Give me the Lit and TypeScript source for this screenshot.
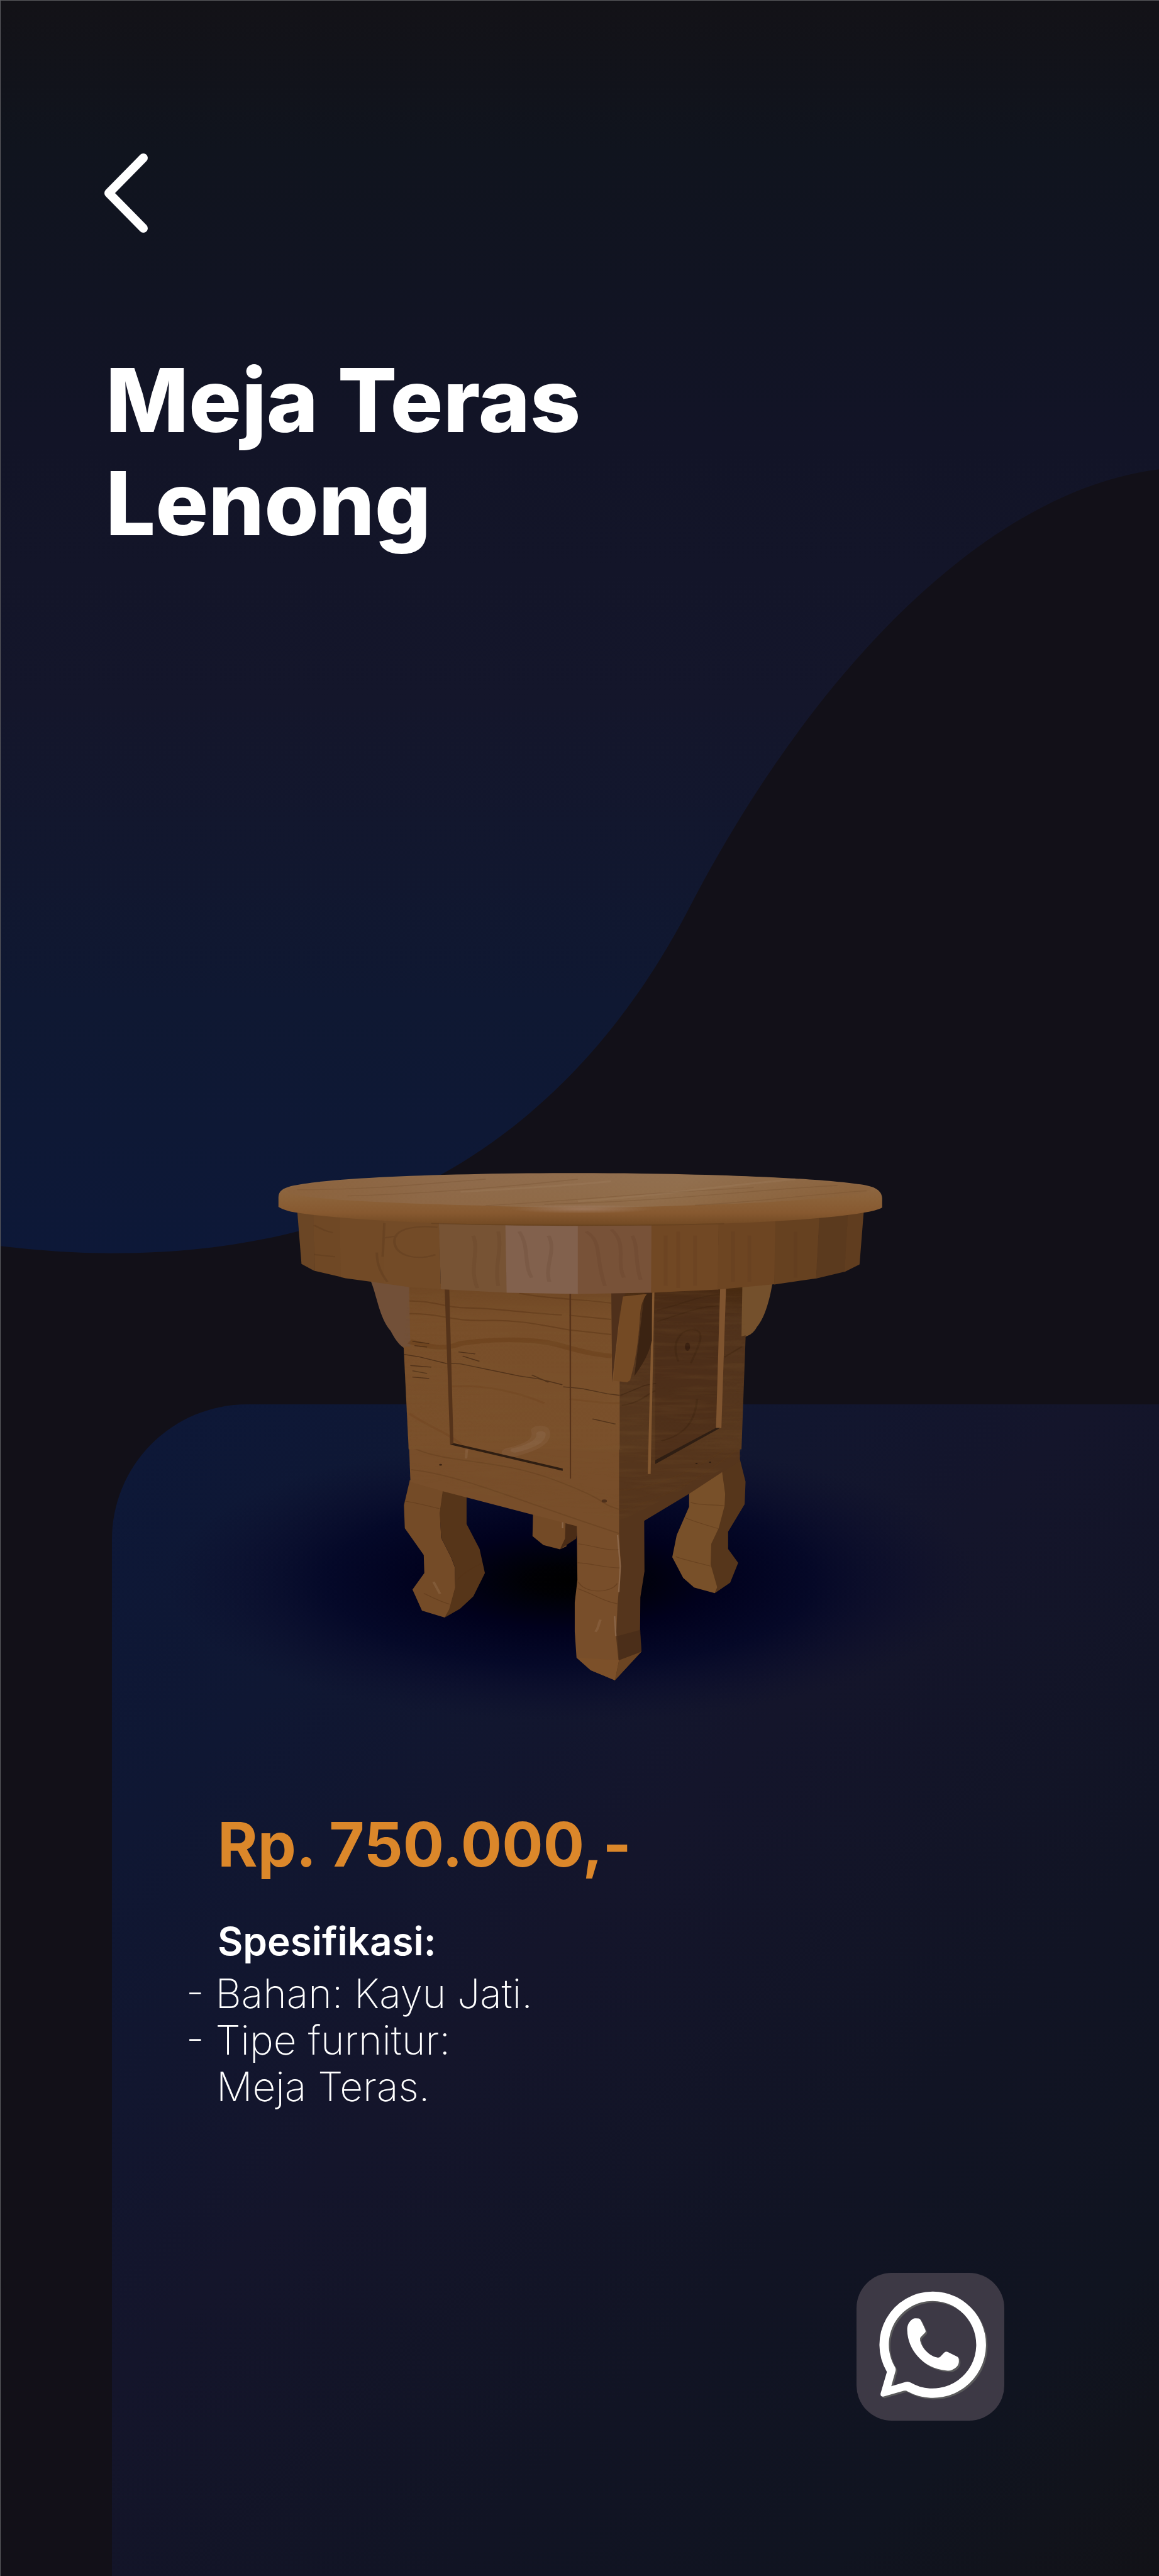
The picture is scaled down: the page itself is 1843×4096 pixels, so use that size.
import { LitElement, html, svg, css } from "lit";
import { customElement } from "lit/decorators.js";

const facets: [string, string][] = [
  ["110,285 150,295 150,567 120,535", "#6b4625"],
  ["149,295 212,305 216,598 150,567", "#6f4825"],
  ["211,305 318,322 316,628 225,603 214,598", "#724a26"],
  ["317,320 449,335 453,656 377,645 315,628", "#734b27"],
  ["448,335 608,345 611,672 453,656", "#775334"],
  ["607,345 781,350 781,678 610,672", "#82614d"],
  ["780,350 957,345 956,672 780,678", "#785238"],
  ["956,345 1117,335 1115,657 955,672", "#714824"],
  ["1116,335 1253,320 1250,632 1114,657", "#6d4522"],
  ["1252,320 1358,305 1350,604 1249,633", "#664120"],
  ["1357,305 1426,295 1418,572 1349,605", "#5b3a1e"],
  ["1425,295 1463,285 1453,537 1417,573", "#603d1f"],
];

@customElement("product-table-art")
export class ProductTableArt extends LitElement {
  static styles = css`
    :host { display: block; }
    .art { display: block; width: 100%; height: auto; }
  `;

  render() {
    return html`<svg class="art" viewBox="400 3000 2200 1480" role="img" aria-label="Meja Teras Lenong">
      <defs>
        <radialGradient id="shade">
          <stop offset="0" stop-color="#000" />
          <stop offset=".1" stop-color="#000003" stop-opacity=".98" />
          <stop offset=".34" stop-color="#00001c" stop-opacity=".96" />
          <stop offset=".6" stop-color="#020526" stop-opacity=".8" />
          <stop offset=".8" stop-color="#080a2a" stop-opacity=".46" />
          <stop offset="1" stop-color="#0c0e2c" stop-opacity="0" />
        </radialGradient>
        <linearGradient id="rim" x1="0" y1="0" x2="0" y2="1">
          <stop offset="0" stop-color="#8f6b4b" />
          <stop offset=".5" stop-color="#8b6138" />
          <stop offset=".75" stop-color="#875930" />
          <stop offset="1" stop-color="#714923" />
        </linearGradient>
        <linearGradient id="top" x1="0" y1="0" x2="1" y2=".1">
          <stop offset="0" stop-color="#8a6039" />
          <stop offset=".3" stop-color="#8f6b4c" />
          <stop offset=".7" stop-color="#937252" />
          <stop offset="1" stop-color="#8a623c" />
        </linearGradient>
        <linearGradient id="front" x1="0" y1="0" x2="0" y2="1">
          <stop offset="0" stop-color="#6f4724" />
          <stop offset=".2" stop-color="#784e29" />
          <stop offset="1" stop-color="#7a502b" />
        </linearGradient>
        <linearGradient id="side" x1="0" y1="0" x2="0" y2="1">
          <stop offset="0" stop-color="#47290f" />
          <stop offset=".2" stop-color="#4f311b" />
          <stop offset="1" stop-color="#58381e" />
        </linearGradient>
        <radialGradient id="glow">
          <stop offset="0" stop-color="#a98874" stop-opacity=".6" />
          <stop offset="1" stop-color="#a98874" stop-opacity="0" />
        </radialGradient>
        <filter id="grain" x="0" y="0" width="100%" height="100%">
          <feTurbulence type="fractalNoise" baseFrequency=".006 .07" numOctaves="4" seed="8" />
          <feColorMatrix values="0 0 0 0 .2  0 0 0 0 .1  0 0 0 0 .03  1.6 0 0 0 -.68" />
        </filter>
        <clipPath id="front-clip"><path d="M377 640L860 670L880 1100V2070L364 1570V930Z" /></clipPath>
        <clipPath id="wood">
          <path transform="translate(650 2980) scale(1.0842 .5421)" d="M377 600H1173L1180 880L1170 1470L885 1760L378 1568L364 930Z" />
        </clipPath>
      </defs>

      <ellipse cx="1478" cy="4090" rx="1050" ry="365" fill="url(#shade)" />

      <g transform="translate(900 3700) scale(.7653 .4464)">
        <polygon fill="#734a26" points="627,470 625,615 662,667 718,692 740,675 740,530" />
        <polygon fill="#4a2c16" points="737,530 780,545 773,630 718,692 735,630" />
        <polygon fill="#744b27" points="210,290 190,437 193,570 257,725 259,830 219,925 251,1048 328,1088 345,1040 364,915 362,795 350,740 316,625 312,480 324,340" />
        <polygon fill="#563519" points="322,345 402,380 402,545 446,690 464,830 425,965 380,1037 328,1088 343,1040 363,915 362,795 350,740 316,625 311,480" />
        <polygon fill="#785029" points="1155,350 1155,445 1113,610 1098,738 1135,858 1172,914 1242,946 1252,912 1230,780 1232,660 1257,570 1277,440 1279,370 1270,220" />
        <polygon fill="#56361b" points="1266,235 1327,170 1346,300 1343,430 1287,590 1287,690 1321,770 1294,885 1242,946 1250,912 1228,780 1230,660 1255,570 1275,440 1277,370" />
        <polygon fill="#55351c" points="1327,-60 1327,180 1266,245 1155,370 1003,527 1004,820 990,970 989,1170 994,1285 904,1452 880,1330 880,-60" />
        <path fill="#784e2a" d="M204 -60L212 302L322 355L775 558L777 870L768 1000V1170L774 1320L822 1393L904 1452L916 1335L908 1200L913 1010L924 790L918 600V-60Z" />
        <path fill="none" stroke="#8a6547" stroke-width="5" d="M913 610L922 790L917 940M903 1080L907 1195M727 535V570" />
        <path fill="#7c5029" d="M774 1320L822 1393L904 1452L918 1335Z" />
        <path fill="#6b4422" d="M904 1452L994 1285L918 1335Z" />
        <path fill="#452a17" fill-opacity=".6" d="M912 1195L990 1160L994 1285L918 1335Z" />
        <path fill="none" stroke="#573417" stroke-opacity=".45" stroke-width="4" d="M190 412C230 420 270 440 310 456M258 948C290 975 320 1000 345 1010M370 870C390 830 420 800 452 775M778 920C830 950 860 990 912 1008M778 770C830 775 870 800 920 800M780 660C830 670 870 700 916 695M1140 508C1170 530 1220 555 1254 572M1160 420C1200 440 1230 430 1275 440M780 880C800 950 890 950 912 890M1110 735C1150 760 1190 770 1228 790" />
        <path fill="none" stroke="#5c3819" stroke-opacity=".35" stroke-width="6" d="M210 95C330 200 500 160 700 290S840 420 918 460M214 230C380 260 560 400 918 600M920 470C1060 400 1200 280 1325 100M920 350C1080 330 1200 200 1330 50" />
        <path fill="none" stroke="#96704f" stroke-opacity=".4" stroke-width="9" d="M855 1100C845 1140 850 1150 838 1170M290 880L312 950M403 110L400 165" />
        <circle cx="868" cy="412" r="9" fill="#4e301b" /><circle cx="314" cy="202" r="5" fill="#3c2414" />
        <circle cx="1180" cy="194" r="4" fill="#2f1c10" /><circle cx="1226" cy="187" r="4" fill="#2f1c10" />
      </g>

      <g transform="translate(650 2980) scale(1.0842 .5421)">
        <path fill="#725038" d="M284 610C300 680 305 790 333 855C342 890 352 920 364 935H382V630Z" />
        <path fill="#74502c" d="M1245 625C1240 690 1228 790 1208 835C1200 865 1190 875 1183 880L1170 892V625Z" />
        <path fill="url(#front)" d="M377 630H885V1420H376L364 930H380Z" />
        <path fill="url(#side)" d="M880 640H1173L1171 880L1181 876L1171 1420H880Z" />
        <path fill="#4a2c18" fill-opacity=".6" d="M965 650H1118L1112 1320L965 1480Z" />
        <g clip-path="url(#front-clip)" fill="none">
          <path stroke="#5a3416" stroke-opacity=".5" stroke-width="6" d="M378 712C440 710 460 745 520 745S680 775 742 778M378 772C450 770 480 810 560 805S700 830 760 850L860 872M640 675C700 700 800 705 860 722M760 780L860 800" />
          <path stroke="#623612" stroke-opacity=".35" stroke-width="22" d="M378 905C440 940 470 940 500 915C580 890 680 890 740 925S820 965 862 975" />
          <path stroke="#6a3d18" stroke-opacity=".28" stroke-width="8" d="M480 1120C560 1110 640 1150 700 1200M378 1250C430 1320 460 1330 500 1395M760 1180C800 1190 840 1200 880 1200" />
          <path stroke="#3f2513" stroke-opacity=".7" stroke-width="4" d="M365 967L400 978L465 1010L500 1012L640 1070L690 1085L743 1112M745 1122L790 1130L850 1155L882 1163M385 905L425 915M390 925L420 932M380 1020L430 1028M385 1045L420 1058M385 1075L425 1082M495 955L535 965M505 975L545 1000M670 1065L710 1100M815 1275L870 1300" />
          <path stroke="#a98874" stroke-opacity=".14" stroke-width="44" stroke-linecap="round" d="M690 1330C700 1380 670 1410 620 1435" />
          <path stroke="#a98874" stroke-opacity=".16" stroke-width="22" stroke-linecap="round" d="M692 1345C695 1380 670 1405 630 1425" />
        </g>
        <path fill="none" stroke="#3f2513" stroke-opacity=".7" stroke-width="4" d="M882 1163L940 1115L967 1105" />
        <path fill="none" stroke="#3b2210" stroke-opacity=".4" stroke-width="5" d="M970 755C1020 735 1060 690 1118 680M970 810C1020 780 1060 740 1116 735M1130 980L1172 930M885 1210C930 1200 950 1150 965 1140M1020 1000C1000 900 1030 840 1060 850S1060 960 1050 1010M980 1380C1040 1350 1060 1280 1065 1180" />
        <ellipse cx="1042" cy="930" rx="6" ry="20" fill="#371e10" />
      </g>
      <g clip-path="url(#wood)"><rect x="1000" y="3300" width="1000" height="650" filter="url(#grain)" opacity=".3" /></g>
      <g transform="translate(650 2980) scale(1.0842 .5421)">
        <path fill="#55331a" d="M462 650H473L483 1392L475 1398Z" />
        <path fill="#2f1e12" d="M475 1398L484 1391L744 1512V1523Z" />
        <path fill="#57331a" d="M760 670H764V1560H761Z" />
        <path fill="#835830" d="M958 670H963L954 1538H947Z" />
        <path fill="#7f542f" d="M1120 650H1134L1123 1318L1110 1324Z" />
        <path fill="#2f1e13" d="M965 1472L1110 1318H1120L965 1491Z" />
        <path fill="#4f301b" d="M860 670H895L882 740L862 1100Z" />
        <path fill="#3b2312" d="M940 670H957V900C950 960 940 1000 915 1070Z" />
        <path fill="#744a24" d="M888 690L945 678C930 720 930 750 928 800C925 900 918 1000 905 1090L898 1100L865 1092L875 900L882 760Z" />
        ${facets.map(([points, color]) => svg`<polygon points=${points} fill=${color} />`)}
        <g fill="none" stroke="#56341a" stroke-opacity=".3" stroke-width="6">
          <path d="M445 360C400 350 340 360 342 430S400 520 440 490M318 340L314 500M320 410L350 400M300 480C300 540 310 580 325 620M150 350C170 370 180 380 195 385M150 490L200 500" />
          <path stroke-opacity=".14" stroke-width="9" d="M530 400C545 470 520 560 540 650M590 380C600 470 580 540 590 640M640 380C665 450 650 540 670 600M710 400C730 470 700 540 712 620M800 380C840 430 820 500 845 640M860 370C900 440 870 520 890 600M910 400C925 450 915 520 930 610M990 400V640M1020 380V650M1060 400V640M1150 380V620M1190 400V620M1300 380V600" />
        </g>
        <path fill="url(#rim)" d="M65 262V215C66 185 75 175 95 163C190 120 480 101 780 101C1090 101 1370 125 1470 160C1495 170 1506 190 1507 220V265C1500 275 1480 284 1462 290C1330 335 1050 353 780 353C500 353 230 328 110 290C90 284 75 275 65 262Z" />
        <path fill="url(#top)" d="M85 178C150 125 480 104 780 104C1090 104 1380 125 1480 170C1500 205 1300 240 1060 254C900 268 680 268 560 256C340 245 60 225 85 178Z" opacity=".7" />
        <ellipse cx="790" cy="272" rx="170" ry="22" fill="url(#glow)" />
        <path fill="none" stroke="#6d4626" stroke-opacity=".25" stroke-width="4" d="M230 210C400 200 600 170 780 130M560 256C760 235 900 200 1200 170M700 250C1000 235 1200 180 1400 160M110 180C300 180 420 150 560 130M1060 254C1200 240 1350 200 1470 185" />
        <path fill="none" stroke="#a58363" stroke-opacity=".25" stroke-width="9" d="M780 235C950 215 1100 165 1300 130M500 190C640 175 760 160 860 140" />
        <path fill="none" stroke="#5e3b1c" stroke-opacity=".5" stroke-width="5" d="M430 341C600 352 950 354 1130 342" />
      </g>
    </svg>`;
  }
}

@customElement("app-root")
export class AppRoot extends LitElement {
  static styles = css`
    :host { display: block; }
    .page {
      position: relative;
      box-sizing: border-box;
      display: flex;
      flex-direction: column;
      min-height: 100vh;
      overflow: hidden;
      background: #121018;
      color: #fff;
      font-family: Inter, "Open Sans", sans-serif;
    }
    .page::after {
      content: "";
      position: absolute;
      inset: 0;
      border-top: 1px solid #5c5c60;
      border-left: 1px solid #5c5c60;
      pointer-events: none;
    }
    .wave { position: absolute; top: 0; left: 0; width: 100%; height: auto; }
    .intro {
      position: relative;
      display: flex;
      flex-direction: column;
      align-items: flex-start;
      gap: 180px;
      min-height: 1844px;
      box-sizing: border-box;
      padding: 240px 160px 0;
    }
    .back { display: block; line-height: 0; }
    .title { margin: 0 0 0 8px; max-width: 900px; font-size: 140px; line-height: 164px; font-weight: 800; }
    .figure { position: relative; z-index: 1; width: 73.3%; margin: 0 auto -520px; }
    .card {
      position: relative;
      flex: 1;
      box-sizing: border-box;
      display: flex;
      flex-direction: column;
      margin-left: 178px;
      padding: 640px 246px 247px 168px;
      border-top-left-radius: 215px;
      background: linear-gradient(135deg, #0d1838 0%, #0f1733 20%, #14152b 44%, #111424 68%, #101420 85%, #121217 100%);
    }
    .price { margin: 0; color: #db872a; font-size: 97px; line-height: 120px; font-weight: 700; }
    .heading { margin: 52px 0 4px; font-size: 62px; line-height: 84px; font-weight: 600; }
    .specs { margin: 0 0 0 -50px; padding: 0; list-style: none; font-size: 64px; line-height: 74px; font-weight: 200; }
    .detail { display: block; padding-left: 48px; }
    .chat {
      display: grid;
      place-items: center;
      align-self: flex-end;
      width: 235px;
      height: 235px;
      margin-top: auto;
      border-radius: 56px;
      background: #3d3945;
    }
  `;

  render() {
    return html`<main class="page">
      <svg class="wave" viewBox="0 0 3001 3260" aria-hidden="true">
        <defs>
          <linearGradient id="sky" x1="0" y1="0" x2="0" y2="1">
            <stop offset="0" stop-color="#131217" />
            <stop offset=".12" stop-color="#10141e" />
            <stop offset=".35" stop-color="#121427" />
            <stop offset=".56" stop-color="#14162b" />
            <stop offset=".8" stop-color="#0f1832" />
            <stop offset="1" stop-color="#0d1838" />
          </linearGradient>
        </defs>
        <path fill="url(#sky)" d="M0 0H3001V1215C2560 1270 2108 1729 1785 2350C1462 2971 945 3245 287 3245Q150 3244 0 3226Z" />
      </svg>
      <header class="intro">
        <a class="back" href="#" aria-label="Kembali">
          <svg width="80" height="134" viewBox="0 0 80 134" fill="none" stroke="#fff" stroke-width="14" stroke-linecap="round" stroke-linejoin="round" aria-hidden="true"><path d="M68 11L13 67L68 123" /></svg>
        </a>
        <h1 class="title">Meja Teras Lenong</h1>
      </header>
      <product-table-art class="figure"></product-table-art>
      <section class="card">
        <p class="price">Rp. 750.000,-</p>
        <h2 class="heading">Spesifikasi:</h2>
        <ul class="specs">
          <li>- Bahan: Kayu Jati.</li>
          <li>- Tipe furnitur:<span class="detail">Meja Teras.</span></li>
        </ul>
        <a class="chat" href="#" aria-label="WhatsApp">
          <svg width="235" height="235" viewBox="204 193 1148 1148" aria-hidden="true">
            <defs>
              <g id="phone">
                <path fill-rule="evenodd" d="M795 338A413 413 0 1 1 600 1114Q590 1105 570 1109L412 1154Q388 1156 391 1130L440 962A413 413 0 0 1 795 338ZM795 411A340 340 0 0 0 500 920Q512 935 507 955L474 1073L585 1041Q605 1034 625 1046A340 340 0 1 0 795 411Z" />
                <path d="M660 546Q690 545 698 553Q706 562 738 634Q744 646 738 656L702 692Q694 700 698 718C712 780 770 838 830 850Q844 853 854 845L884 814Q896 801 912 807L986 844Q999 851 999 870C1004 915 972 936 942 949Q930 954 900 951C720 935 602 790 598 640C596 600 612 570 640 552Q648 546 660 546Z" />
              </g>
            </defs>
            <use href="#phone" x="12" y="12" fill="#5a5a5b" />
            <use href="#phone" fill="#fff" />
          </svg>
        </a>
      </section>
    </main>`;
  }
}
